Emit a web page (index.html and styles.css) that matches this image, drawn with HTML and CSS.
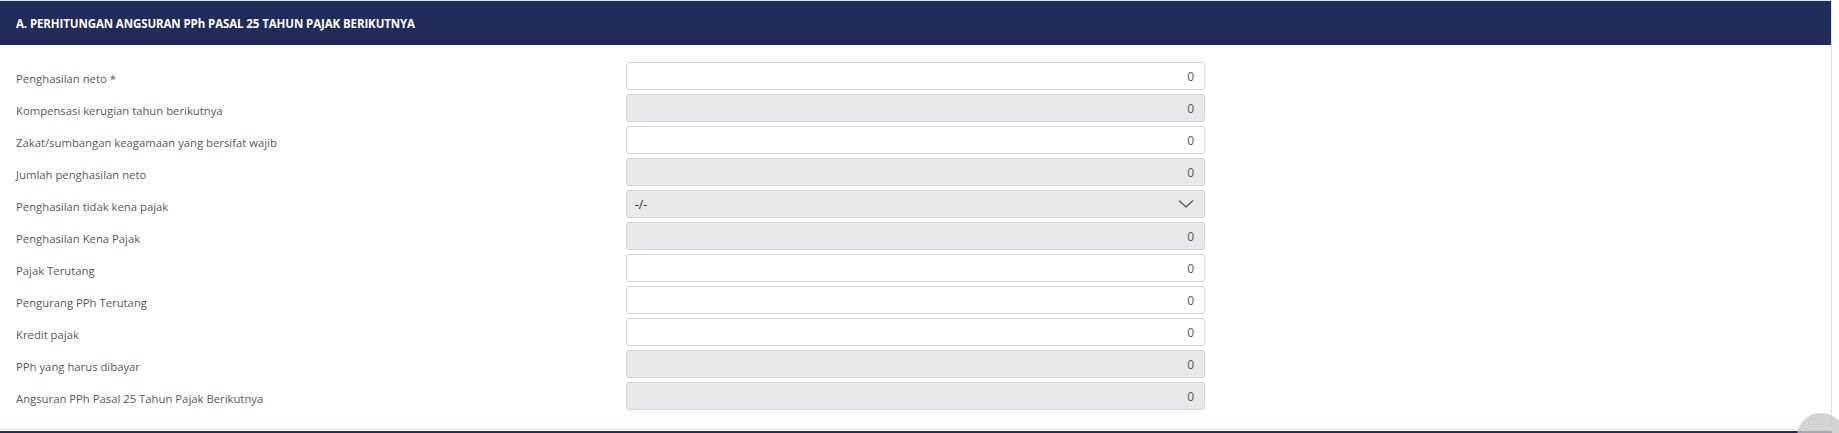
FILE: index.html
```html
<!DOCTYPE html>
<html lang="id">
<head>
<meta charset="utf-8">
<title>Perhitungan Angsuran PPh Pasal 25</title>
<link rel="stylesheet" href="styles.css">
</head>
<body>
<div class="card">
  <div class="card-header">A. PERHITUNGAN ANGSURAN PPh PASAL 25 TAHUN PAJAK BERIKUTNYA</div>
  <div class="card-body">
    <div class="row"><label class="lbl">Penghasilan neto *</label><div class="input">0</div></div>
    <div class="row"><label class="lbl">Kompensasi kerugian tahun berikutnya</label><div class="input disabled">0</div></div>
    <div class="row"><label class="lbl">Zakat/sumbangan keagamaan yang bersifat wajib</label><div class="input">0</div></div>
    <div class="row"><label class="lbl">Jumlah penghasilan neto</label><div class="input disabled">0</div></div>
    <div class="row"><label class="lbl">Penghasilan tidak kena pajak</label>
      <div class="input disabled select"><span class="sel-text">-/-</span>
        <svg class="chev" width="16" height="10" viewBox="0 0 16 10"><path d="M1 1.5 L8 8 L15 1.5" fill="none" stroke="#5f6368" stroke-width="1.6"/></svg>
      </div>
    </div>
    <div class="row"><label class="lbl">Penghasilan Kena Pajak</label><div class="input disabled">0</div></div>
    <div class="row"><label class="lbl">Pajak Terutang</label><div class="input">0</div></div>
    <div class="row"><label class="lbl">Pengurang PPh Terutang</label><div class="input">0</div></div>
    <div class="row"><label class="lbl">Kredit pajak</label><div class="input">0</div></div>
    <div class="row"><label class="lbl">PPh yang harus dibayar</label><div class="input disabled">0</div></div>
    <div class="row"><label class="lbl">Angsuran PPh Pasal 25 Tahun Pajak Berikutnya</label><div class="input disabled">0</div></div>
  </div>
</div>
<div class="next-card"></div>
<div class="fab"></div>
</body>
</html>
```
FILE: styles.css
```css
html, body {
  margin: 0;
  padding: 0;
  background: #ffffff;
  font-family: "Open Sans", "Noto Sans", "Liberation Sans", sans-serif;
  overflow: hidden;
}
.card {
  box-sizing: border-box;
  width: 1832px;
  border-top: 1px solid #dfe3ec;
  border-right: 1px solid #dfe3ec;
  border-bottom: 1px solid #dfe3ec;
}
.card-header {
  height: 44px;
  background: #222c5c;
  color: #ffffff;
  font-weight: 700;
  font-size: 11.5px;
  display: flex;
  align-items: center;
  padding-left: 16px;
  letter-spacing: -0.1px;
}
.card-body {
  padding: 17px 0 19px 16px;
  display: flex;
  flex-direction: column;
  gap: 4px;
}
.row {
  display: grid;
  grid-template-columns: 610px 579px;
  height: 28px;
}
.lbl {
  font-size: 11.3px;
  color: #555b62;
  padding-top: 9px;
  line-height: 16px;
}
.input {
  box-sizing: border-box;
  height: 28px;
  border: 1px solid #d2d5da;
  border-radius: 3px;
  background: #ffffff;
  font-size: 12px;
  color: #555555;
  display: flex;
  align-items: center;
  justify-content: flex-end;
  padding: 0 10px;
}
.input.disabled {
  background: #e8e9ed;
}
.select {
  justify-content: space-between;
  padding: 0 10px 0 8px;
}
.sel-text {
  color: #222222;
}
.chev {
  display: block;
}
.next-card {
  margin-top: 1px;
  height: 10px;
  width: 1832px;
  background: #222c5c;
}
.fab {
  position: fixed;
  left: 1797px;
  top: 413px;
  width: 48px;
  height: 48px;
  border-radius: 50%;
  background: rgba(200, 200, 200, 0.8);
}
```
